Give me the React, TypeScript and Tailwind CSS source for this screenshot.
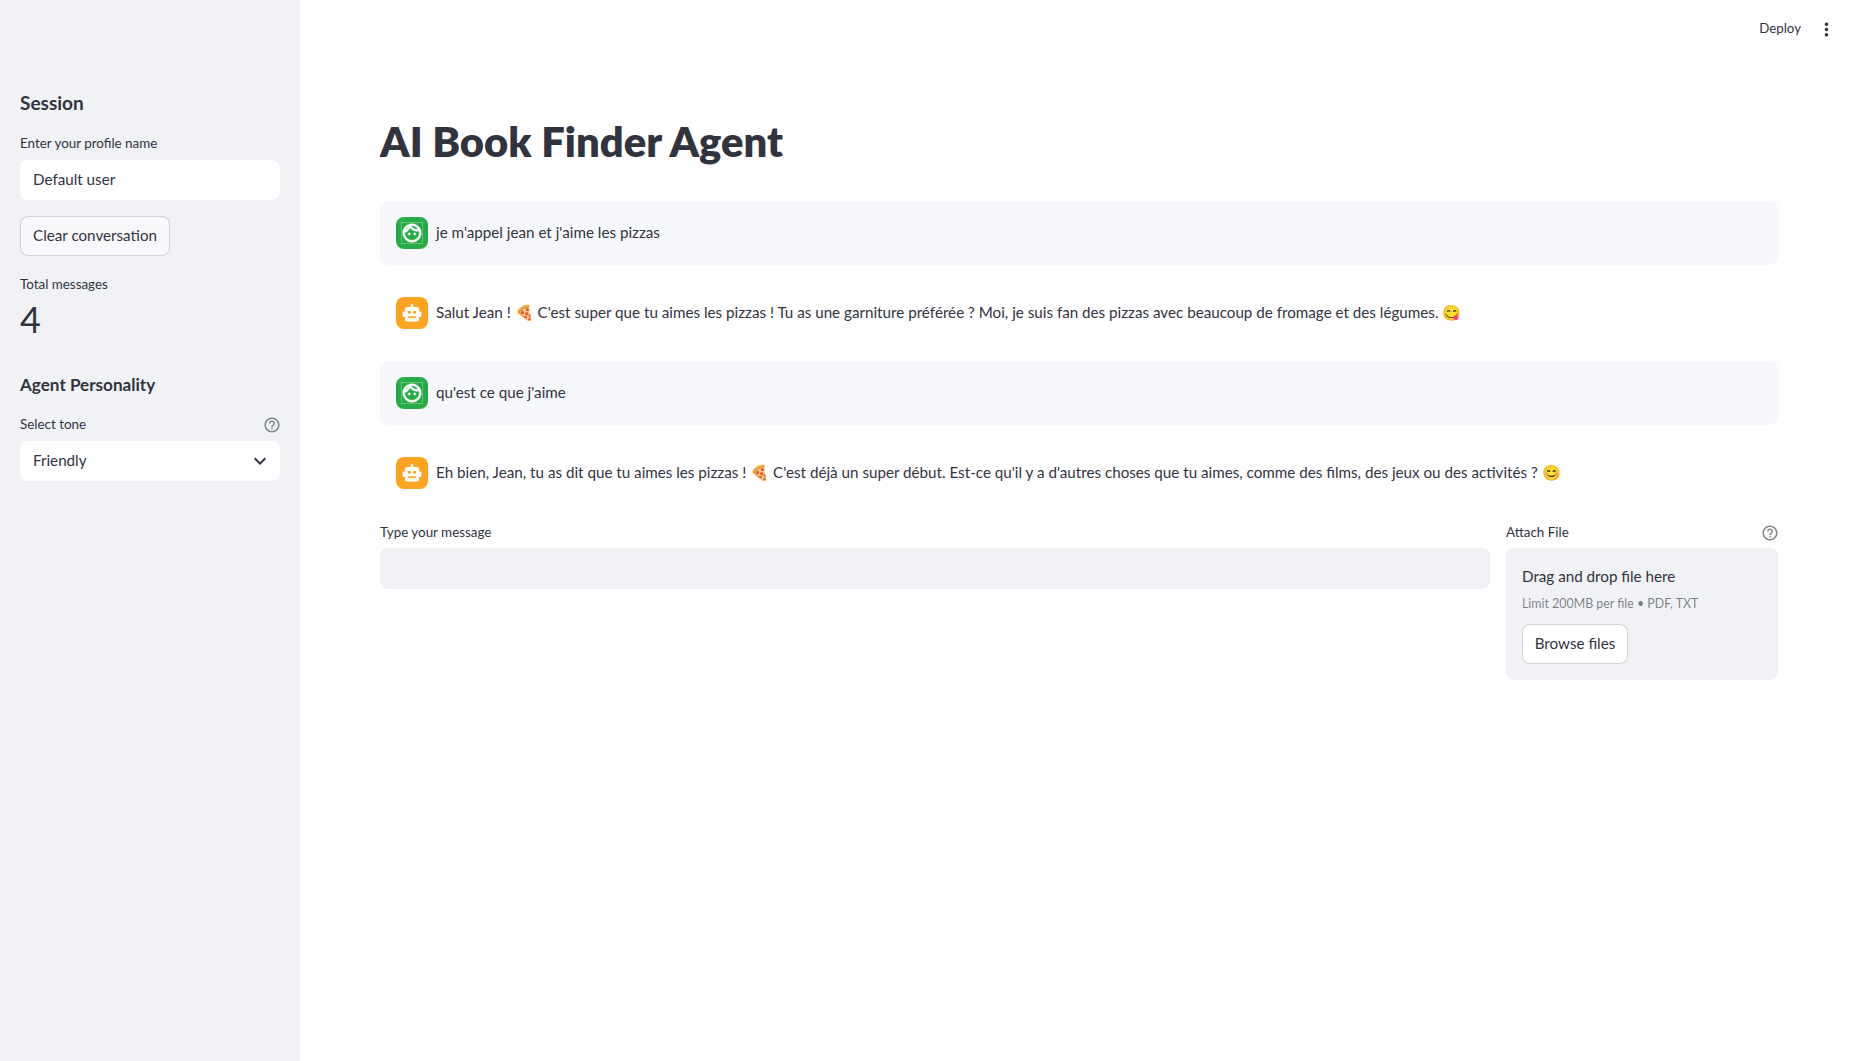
import React from 'react';
import { MdOutlineFace, MdHelpOutline, MdMoreVert, MdExpandMore } from 'react-icons/md';

const FONT = "font-['Lato','Noto_Sans',sans-serif]";

const messages = [
    { role: 'user', text: "je m'appel jean et j'aime les pizzas" },
    {
        role: 'bot',
        text: "Salut Jean ! 🍕 C'est super que tu aimes les pizzas ! Tu as une garniture préférée ? Moi, je suis fan des pizzas avec beaucoup de fromage et des légumes. 😋",
    },
    { role: 'user', text: "qu'est ce que j'aime" },
    {
        role: 'bot',
        text: "Eh bien, Jean, tu as dit que tu aimes les pizzas ! 🍕 C'est déjà un super début. Est-ce qu'il y a d'autres choses que tu aimes, comme des films, des jeux ou des activités ? 😊",
    },
];

function RobotIcon() {
    return (
        <svg width="24" height="24" viewBox="0 0 24 24">
            <rect x="10.8" y="3" width="2.4" height="4" fill="#fff" />
            <rect x="2.6" y="10.5" width="3" height="5.5" rx="1" fill="#fff" />
            <rect x="18.4" y="10.5" width="3" height="5.5" rx="1" fill="#fff" />
            <rect x="5" y="6" width="14" height="14.5" rx="2" fill="#fff" />
            <rect x="7.8" y="10" width="3" height="2.6" fill="#ffa421" />
            <rect x="13.2" y="10" width="3" height="2.6" fill="#ffa421" />
            <rect x="8" y="15.4" width="8" height="1.6" fill="#ffa421" />
        </svg>
    );
}

function ChatMessage({ role, text }: { role: string; text: string }) {
    const isUser = role === 'user';
    return (
        <div className={`flex h-16 items-center gap-2 rounded-lg px-4 ${isUser ? 'bg-[#f7f8fb]' : ''}`}>
            <div
                className={`flex h-8 w-8 shrink-0 items-center justify-center rounded-lg text-white ${isUser ? 'bg-[#28ab46]' : 'bg-[#ffa421]'}`}
            >
                {isUser ? <MdOutlineFace size={22} stroke="currentColor" strokeWidth={0.6} /> : <RobotIcon />}
            </div>
            <p className="pb-[2px] text-[15.2px]">{text}</p>
        </div>
    );
}

function FieldLabel({ label, help }: { label: string; help?: boolean }) {
    return (
        <div className="flex h-[18px] items-center justify-between text-[13.4px] leading-[18px]">
            <span>{label}</span>
            {help && <MdHelpOutline size={18} className="mt-[2px] -mr-[1px] text-[#31333f]/60" />}
        </div>
    );
}

function Sidebar() {
    return (
        <aside className="flex min-h-[1061px] w-[300px] shrink-0 flex-col bg-[#f0f2f6] px-5 pt-[91px]">
            <h2 className="text-[19px] leading-6 font-bold">Session</h2>
            <div className="mt-[19px]">
                <FieldLabel label="Enter your profile name" />
            </div>
            <div className="mt-2 flex h-10 items-center rounded-lg bg-white px-[13px] pb-[2px] text-[15.2px]">
                Default user
            </div>
            <button className="mt-4 flex h-10 w-[150px] items-center justify-center rounded-lg border border-[#31333f]/20 bg-[#f9f9fb] pb-[2px] text-[15.2px]">
                Clear conversation
            </button>
            <div className="mt-[19px]">
                <FieldLabel label="Total messages" />
            </div>
            <div className="mt-1 text-[36px] leading-[44px] font-normal">4</div>
            <h2 className="mt-8 text-[17.1px] leading-6 font-bold">Agent Personality</h2>
            <div className="mt-[18px]">
                <FieldLabel label="Select tone" help />
            </div>
            <div className="mt-2 flex h-10 items-center justify-between rounded-lg bg-white pr-2 pl-[13px] text-[15.2px]">
                <span className="pb-[2px]">Friendly</span>
                <MdExpandMore size={24} />
            </div>
        </aside>
    );
}

export default function App() {
    return (
        <div className={`flex min-h-[1061px] bg-white text-[#31333f] ${FONT}`}>
            <Sidebar />
            <main className="relative min-w-0 flex-1 pt-[113px] pr-20 pl-20">
                <div className="absolute top-[19px] right-[21px] flex items-center gap-[15px] text-[13.3px]">
                    <span className="pb-[2px]">Deploy</span>
                    <MdMoreVert size={21} />
                </div>
                <h1 className="text-[41.7px] leading-[56px] font-extrabold">AI Book Finder Agent</h1>
                <div className="mt-8 flex flex-col gap-4">
                    {messages.map((m, i) => (
                        <ChatMessage key={i} role={m.role} text={m.text} />
                    ))}
                </div>
                <div className="mt-[18px] flex items-start gap-4">
                    <div className="flex-1">
                        <FieldLabel label="Type your message" />
                        <div className="mt-[7px] h-[41px] rounded-lg bg-[#f0f2f6]" />
                    </div>
                    <div className="w-[272px]">
                        <FieldLabel label="Attach File" help />
                        <div className="mt-[7px] flex h-[132px] flex-col items-start rounded-lg bg-[#f0f2f6] px-4 pt-4">
                            <div className="text-[15.2px] leading-6">Drag and drop file here</div>
                            <div className="mt-[6px] text-[12.4px] leading-[20px] text-[#31333f]/60">
                                Limit 200MB per file • PDF, TXT
                            </div>
                            <button className="mt-[10px] flex h-10 w-[106px] items-center justify-center rounded-lg border border-[#31333f]/20 bg-white pb-[2px] text-[15.2px]">
                                Browse files
                            </button>
                        </div>
                    </div>
                </div>
            </main>
        </div>
    );
}
